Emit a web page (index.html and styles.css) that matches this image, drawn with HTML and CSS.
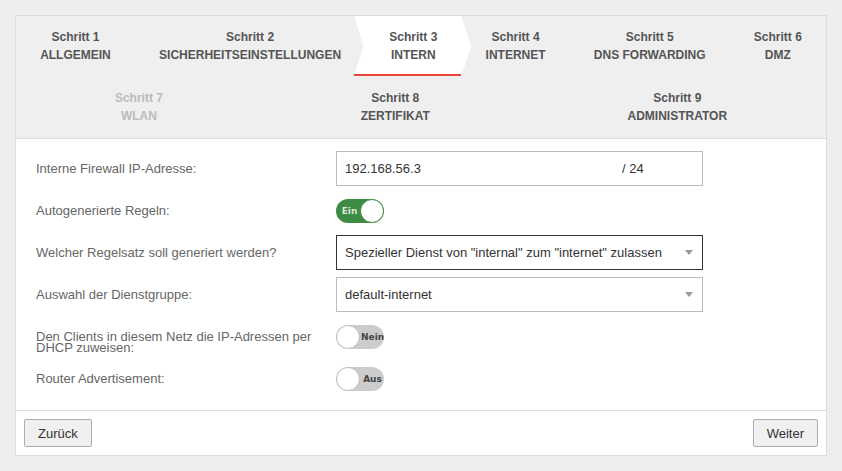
FILE: index.html
```html
<!DOCTYPE html>
<html lang="de">
<head>
  <meta charset="UTF-8" />
  <meta name="viewport" content="width=device-width, initial-scale=1.0" />
  <title>Assistent - Intern</title>
  <link rel="stylesheet" href="styles.css">
</head>
<body>
  <div class="wizard">
    <!-- Schritte -->
    <div class="steps">
      <div class="step">Schritt 1<br>ALLGEMEIN</div>
      <div class="step">Schritt 2<br>SICHERHEITSEINSTELLUNGEN</div>
      <div class="step active">Schritt 3<br>INTERN</div>
      <div class="step">Schritt 4<br>INTERNET</div>
      <div class="step">Schritt 5<br>DNS FORWARDING</div>
      <div class="step">Schritt 6<br>DMZ</div>
      <div class="step disabled">Schritt 7<br>WLAN</div>
      <div class="step">Schritt 8<br>ZERTIFIKAT</div>
      <div class="step">Schritt 9<br>ADMINISTRATOR</div>
    </div>

    <!-- Formular -->
    <div class="form">
      <div class="form-row">
        <label class="form-label">Interne Firewall IP-Adresse:</label>
        <div class="input-field">
          <span class="ip">192.168.56.3</span>
          <span class="suffix">/ 24</span>
        </div>
      </div>

      <div class="form-row">
        <label class="form-label">Autogenerierte Regeln:</label>
        <span class="toggle on"><span class="toggle-text">Ein</span><span class="knob"></span></span>
      </div>

      <div class="form-row">
        <label class="form-label">Welcher Regelsatz soll generiert werden?</label>
        <div class="input-field select focused">
          <span>Spezieller Dienst von "internal" zum "internet" zulassen</span>
          <span class="arrow"></span>
        </div>
      </div>

      <div class="form-row">
        <label class="form-label">Auswahl der Dienstgruppe:</label>
        <div class="input-field select">
          <span>default-internet</span>
          <span class="arrow"></span>
        </div>
      </div>

      <div class="form-row">
        <label class="form-label two-lines">Den Clients in diesem Netz die IP-Adressen per DHCP zuweisen:</label>
        <span class="toggle off"><span class="knob"></span><span class="toggle-text">Nein</span></span>
      </div>

      <div class="form-row">
        <label class="form-label">Router Advertisement:</label>
        <span class="toggle off"><span class="knob"></span><span class="toggle-text">Aus</span></span>
      </div>
    </div>

    <!-- Footer -->
    <div class="wizard-footer">
      <button class="button">Zurück</button>
      <button class="button">Weiter</button>
    </div>
  </div>
</body>
</html>
```

FILE: styles.css
```css
html, body {
  margin: 0;
  font-family: "Liberation Sans", Arial, sans-serif;
}

body {
  padding: 15px;
  background-color: #eeeeee;
}

.wizard {
  border: 1px solid #dcdcdc;
  background-color: white;
}

/* Schritt-Leiste */
.steps {
  display: flex;
  flex-wrap: wrap;
  justify-content: space-around;
  background-color: #efefef;
  border-bottom: 1px solid #dcdcdc;
}

.step {
  position: relative;
  padding: 12px 24px 11px;
  border-bottom: 2px solid transparent;
  font-size: 12px;
  font-weight: bold;
  line-height: 18px;
  text-align: center;
  color: #555;
  white-space: nowrap;
}

.step.disabled {
  color: #bbb;
}

/* aktiver Schritt als Pfeil mit roter Linie */
.step.active {
  z-index: 0;
}

.step.active::before {
  content: "";
  position: absolute;
  top: 0;
  bottom: -1px;
  left: -11px;
  right: -10px;
  background-color: white;
  clip-path: polygon(0 0, 107px 0, 100% 50%, 107px 100%, 0 100%, 9px 50%);
  z-index: -1;
}

.step.active::after {
  content: "";
  position: absolute;
  left: -11px;
  right: 0;
  bottom: -1px;
  height: 2px;
  background-color: #e8473a;
}

/* Formular */
.form {
  display: flex;
  flex-direction: column;
  gap: 7px;
  padding: 12px 20px 14px;
}

.form-row {
  display: flex;
  align-items: center;
  height: 35px;
}

.form-label {
  width: 300px;
  box-sizing: border-box;
  padding-right: 16px;
  font-size: 13px;
  line-height: 11px;
  color: #666;
}

/* erste Zeile bleibt mittig, die zweite läuft nach unten */
.form-label.two-lines {
  padding-top: 11px;
}

.input-field {
  display: flex;
  align-items: center;
  box-sizing: border-box;
  width: 367px;
  height: 35px;
  padding: 0 9px 0 8px;
  border: 1px solid #bdbdbd;
  font-size: 13px;
  color: #333;
  white-space: nowrap;
}

.ip {
  width: 277px;
}

.select {
  justify-content: space-between;
}

.select.focused {
  border-color: #333;
}

.arrow {
  width: 0;
  height: 0;
  border-left: 4px solid transparent;
  border-right: 4px solid transparent;
  border-top: 5px solid #999;
}

/* Schalter */
.toggle {
  display: flex;
  align-items: center;
  width: 48px;
  height: 24px;
  border-radius: 12px;
  overflow: hidden;
  font-family: "DejaVu Sans", Verdana, sans-serif;
  font-size: 9px;
  font-weight: bold;
}

.toggle.on {
  background-color: #3d8b45;
  color: #d8e6d8;
}

.toggle.off {
  background-color: #cccccc;
  color: #444;
}

.toggle-text {
  flex: 1;
  text-align: center;
  white-space: nowrap;
}

.toggle.on .toggle-text {
  padding-left: 3px;
}

.toggle.off .toggle-text {
  padding-left: 1px;
}

.knob {
  flex: none;
  width: 22px;
  height: 22px;
  border-radius: 50%;
  background-color: white;
}

.toggle.on .knob {
  border: 1px solid #3d8b45;
}

.toggle.off .knob {
  border: 1px solid #bbb;
}

/* Footer */
.wizard-footer {
  display: flex;
  justify-content: space-between;
  padding: 8px;
  border-top: 1px solid #dcdcdc;
}

.button {
  height: 28px;
  padding: 0 13px;
  background-color: #f0f0f0;
  border: 1px solid #adadad;
  border-radius: 2px;
  font-family: "Liberation Sans", Arial, sans-serif;
  font-size: 13px;
  color: #333;
}
```
